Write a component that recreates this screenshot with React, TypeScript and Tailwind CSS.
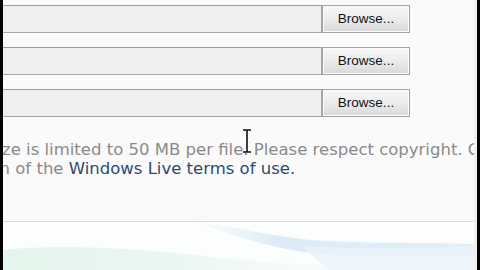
import React from "react";

const rows = [0, 1, 2];

function FileRow() {
  return (
    <div className="flex h-[28px]">
      <div className="w-[323px] -ml-[4px] border border-[#a9a9a9] border-t-[#9c9c9c] bg-[#efefef]" />
      <button
        type="button"
        className="w-[88px] border border-[#a3a3a3] bg-gradient-to-b from-[#f7f7f7] via-[#ececec] to-[#d9d9d9] text-[13.5px] text-[#111] shadow-[inset_0_0_0_1px_#fbfbfb]"
        style={{ fontFamily: "Tahoma, 'Liberation Sans', Arial, sans-serif" }}
      >
        Browse...
      </button>
    </div>
  );
}

function Wave() {
  return (
    <svg className="block w-full h-[49px]" viewBox="0 0 474 49" preserveAspectRatio="none">
      <defs>
        <linearGradient id="blue" x1="0" y1="0" x2="1" y2="0">
          <stop offset="0" stopColor="#dcebf6" stopOpacity="0" />
          <stop offset="0.3" stopColor="#d7e8f5" />
          <stop offset="1" stopColor="#dcecf8" />
        </linearGradient>
        <linearGradient id="green" x1="0" y1="0" x2="1" y2="0">
          <stop offset="0" stopColor="#e3f5ec" />
          <stop offset="0.5" stopColor="#ebf7f1" />
          <stop offset="1" stopColor="#eef7f6" stopOpacity="0" />
        </linearGradient>
      </defs>
      <rect width="474" height="49" fill="#fcfdfd" />
      <path d="M190 0 C240 6 270 14 310 18 C370 22 420 20 474 22 L474 34 C420 32 370 36 320 32 C260 26 230 10 190 0 Z" fill="url(#blue)" opacity="0.85" />
      <path d="M300 24 C360 28 420 26 474 24 L474 49 L330 49 C320 42 310 32 300 24 Z" fill="#e9f3fa" opacity="0.8" />
      <path d="M0 28 C60 22 130 26 200 34 C250 40 300 42 360 47 L360 49 L0 49 Z" fill="url(#green)" />
    </svg>
  );
}

export default function App() {
  return (
    <div className="w-[480px] h-[270px] flex bg-black overflow-hidden">
      <div className="w-[3px] shrink-0" />
      <div
        className="relative flex-1 flex flex-col bg-[#fafafa] overflow-hidden border-r-[3px] border-[#f0f0f0]"
        style={{ fontFamily: "'DejaVu Sans', Verdana, sans-serif" }}
      >
        <div className="flex flex-col gap-[14px] pt-[5px]">
          {rows.map((r) => (
            <FileRow key={r} />
          ))}
        </div>

        <div className="mt-[24px] text-[16.5px] leading-[18.5px] text-[#8a8a8a] whitespace-nowrap">
          <div className="-ml-[47px]">
            File size is limited to 50 MB per file. Please respect copyright. Content that violates
          </div>
          <div className="-ml-[84px]">
            in violation of the <span className="text-[#2e4a6e]">Windows Live terms of use.</span>
          </div>
        </div>

        <div className="mt-[43px] border-t border-[#dcdcdc]" />
        <div className="flex-1 bg-[#fcfdfd]">
          <Wave />
        </div>

        {/* text cursor */}
        <svg className="absolute left-[239px] top-[129px]" width="10" height="24" viewBox="0 0 10 24">
          <path d="M1 1 H9 M5 1 V23 M1 23 H9" stroke="#111" strokeWidth="1.6" fill="none" />
        </svg>
      </div>
      <div className="w-[3px] shrink-0" />
    </div>
  );
}
